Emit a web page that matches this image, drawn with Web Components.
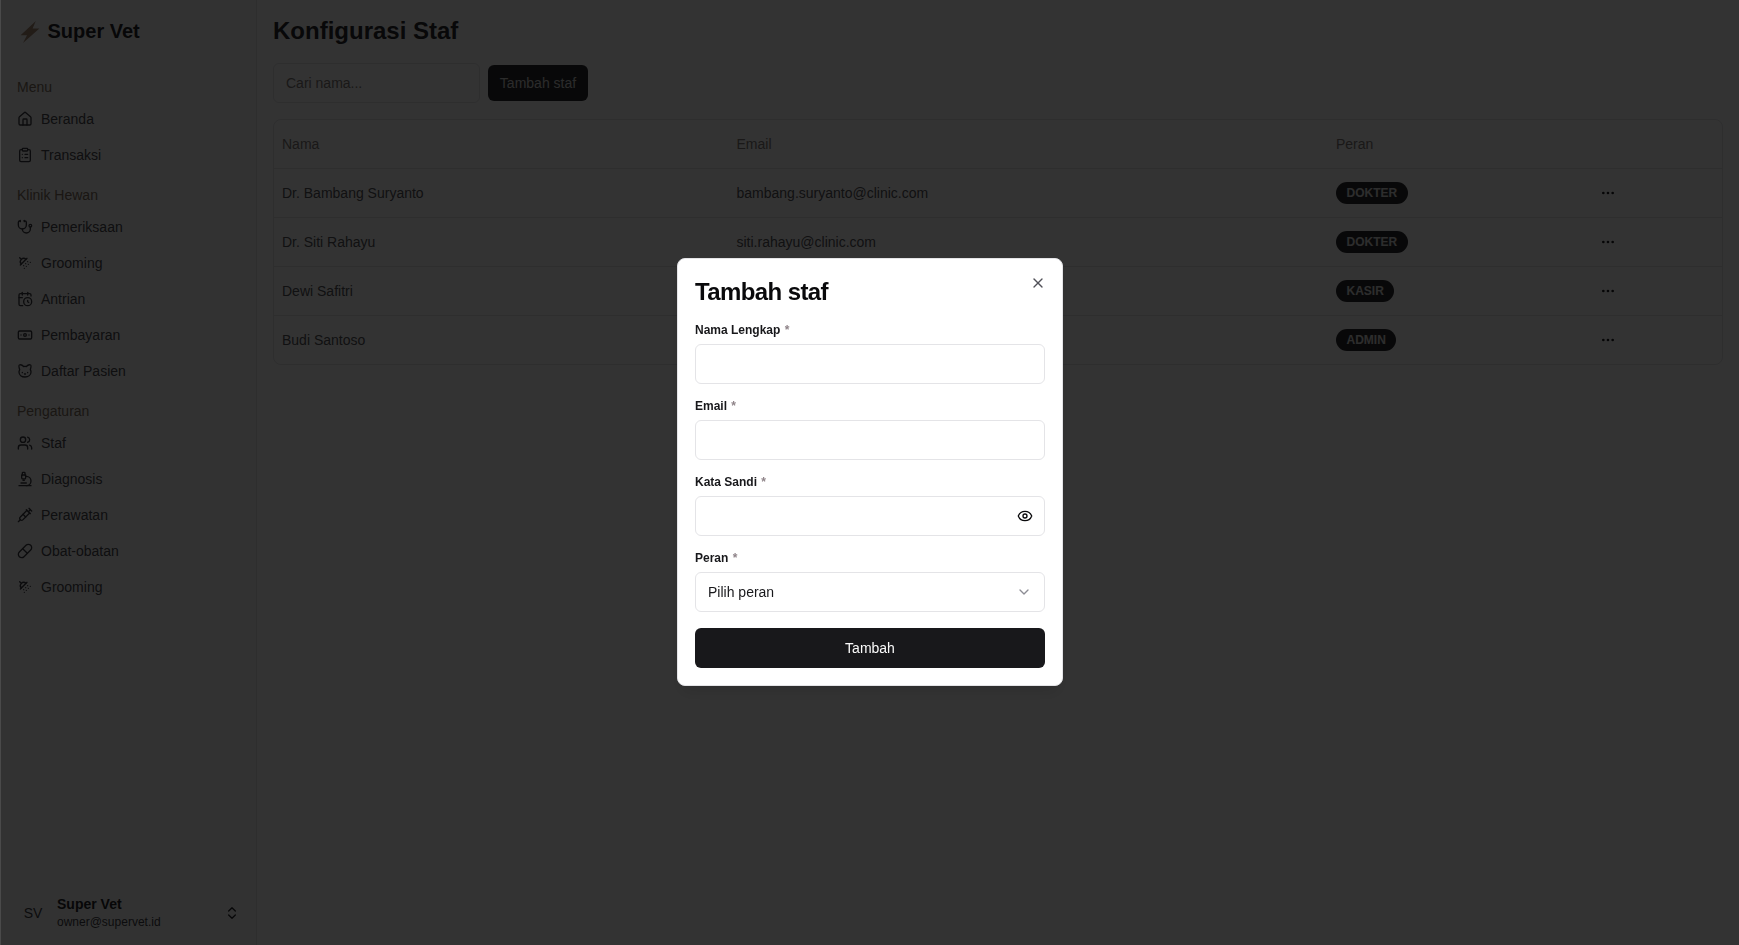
<!DOCTYPE html>
<html lang="id"><head><meta charset="utf-8"><title>Konfigurasi Staf</title>
<style>
html,body{margin:0;height:100%;background:#fff;overflow:hidden}
body{font-family:"Liberation Sans",Arial,sans-serif;font-size:14px;color:#2b2b2e}
</style></head><body>
<app-shell>
  <side-bar slot="side">
    <nav-group label="Menu">
      <nav-item icon="house">Beranda</nav-item>
      <nav-item icon="clipboard">Transaksi</nav-item>
    </nav-group>
    <nav-group label="Klinik Hewan">
      <nav-item icon="stethoscope">Pemeriksaan</nav-item>
      <nav-item icon="shower">Grooming</nav-item>
      <nav-item icon="calendar">Antrian</nav-item>
      <nav-item icon="banknote">Pembayaran</nav-item>
      <nav-item icon="cat">Daftar Pasien</nav-item>
    </nav-group>
    <nav-group label="Pengaturan">
      <nav-item icon="users">Staf</nav-item>
      <nav-item icon="microscope">Diagnosis</nav-item>
      <nav-item icon="syringe">Perawatan</nav-item>
      <nav-item icon="pill">Obat-obatan</nav-item>
      <nav-item icon="shower">Grooming</nav-item>
    </nav-group>
  </side-bar>
  <staff-page>
    <staff-row name="Dr. Bambang Suryanto" email="bambang.suryanto@clinic.com" role="DOKTER"></staff-row>
    <staff-row name="Dr. Siti Rahayu" email="siti.rahayu@clinic.com" role="DOKTER"></staff-row>
    <staff-row name="Dewi Safitri" email="dewi.safitri@clinic.com" role="KASIR"></staff-row>
    <staff-row name="Budi Santoso" email="budi.santoso@clinic.com" role="ADMIN"></staff-row>
  </staff-page>
</app-shell>
<add-staff-dialog></add-staff-dialog>
<script>
const ICONS={
house:'<path d="M15 21v-8a1 1 0 0 0-1-1h-4a1 1 0 0 0-1 1v8"/><path d="M3 10a2 2 0 0 1 .709-1.528l7-5.999a2 2 0 0 1 2.582 0l7 5.999A2 2 0 0 1 21 10v9a2 2 0 0 1-2 2H5a2 2 0 0 1-2-2z"/>',
clipboard:'<rect x="8" y="2" width="8" height="4" rx="1"/><path d="M16 4h2a2 2 0 0 1 2 2v14a2 2 0 0 1-2 2H6a2 2 0 0 1-2-2V6a2 2 0 0 1 2-2h2"/><path d="M12 11h4"/><path d="M12 16h4"/><path d="M8 11h.01"/><path d="M8 16h.01"/>',
stethoscope:'<path d="M11 2v2"/><path d="M5 2v2"/><path d="M5 3H4a2 2 0 0 0-2 2v4a6 6 0 0 0 12 0V5a2 2 0 0 0-2-2h-1"/><path d="M8 15a6 6 0 0 0 12 0v-3"/><circle cx="20" cy="10" r="2"/>',
shower:'<path d="m4 4 2.5 2.5"/><path d="M13.5 6.5a4.95 4.95 0 0 0-7 7"/><path d="M15 5 5 15"/><path d="M14 17v.01"/><path d="M10 16v.01"/><path d="M13 13v.01"/><path d="M16 10v.01"/><path d="M11 20v.01"/><path d="M17 14v.01"/><path d="M20 11v.01"/>',
calendar:'<path d="M16 14v2.2l1.6 1"/><path d="M16 2v4"/><path d="M21 7.5V6a2 2 0 0 0-2-2H5a2 2 0 0 0-2 2v14a2 2 0 0 0 2 2h3.5"/><path d="M3 10h5"/><path d="M8 2v4"/><circle cx="16" cy="16" r="6"/>',
banknote:'<rect width="20" height="12" x="2" y="6" rx="2"/><circle cx="12" cy="12" r="2"/><path d="M6 12h.01M18 12h.01"/>',
cat:'<path d="M12 5c.67 0 1.35.09 2 .26 1.78-2 5.03-2.84 6.42-2.26 1.4.58-.42 7-.42 7 .57 1.07 1 2.24 1 3.44C21 17.9 16.97 21 12 21s-9-3-9-7.56c0-1.25.5-2.4 1-3.44 0 0-1.89-6.42-.5-7 1.39-.58 4.72.23 6.5 2.23A9.04 9.04 0 0 1 12 5Z"/><path d="M8 14v.5"/><path d="M16 14v.5"/><path d="M11.25 16.25h1.5L12 17l-.75-.75Z"/>',
users:'<path d="M16 21v-2a4 4 0 0 0-4-4H6a4 4 0 0 0-4 4v2"/><circle cx="9" cy="7" r="4"/><path d="M22 21v-2a4 4 0 0 0-3-3.87"/><path d="M16 3.13a4 4 0 0 1 0 7.75"/>',
microscope:'<path d="M6 18h8"/><path d="M3 22h18"/><path d="M14 22a7 7 0 1 0 0-14h-1"/><path d="M9 14h2"/><path d="M9 12a2 2 0 0 1-2-2V6h6v4a2 2 0 0 1-2 2Z"/><path d="M12 6V3a1 1 0 0 0-1-1H9a1 1 0 0 0-1 1v3"/>',
syringe:'<path d="m18 2 4 4"/><path d="m17 7 3-3"/><path d="M19 9 8.7 19.3c-1 1-2.5 1-3.4 0l-.6-.6c-1-1-1-2.5 0-3.4L15 5"/><path d="m9 11 4 4"/><path d="m5 19-3 3"/><path d="m14 4 6 6"/>',
pill:'<path d="m10.5 20.5 10-10a4.95 4.95 0 1 0-7-7l-10 10a4.95 4.95 0 1 0 7 7Z"/><path d="m8.5 8.5 7 7"/>',
updown:'<path d="m7 15 5 5 5-5"/><path d="m7 9 5-5 5 5"/>',
eye:'<path d="M2.062 12.348a1 1 0 0 1 0-.696 10.75 10.75 0 0 1 19.876 0 1 1 0 0 1 0 .696 10.75 10.75 0 0 1-19.876 0"/><circle cx="12" cy="12" r="3"/>',
x:'<path d="M18 6 6 18"/><path d="m6 6 12 12"/>',
chevron:'<path d="m6 9 6 6 6-6"/>',
dots:'<circle cx="12" cy="12" r="1"/><circle cx="19" cy="12" r="1"/><circle cx="5" cy="12" r="1"/>'
};
function svg(n,size=16,sw=2){return `<svg xmlns="http://www.w3.org/2000/svg" width="${size}" height="${size}" viewBox="0 0 24 24" fill="none" stroke="currentColor" stroke-width="${sw}" stroke-linecap="round" stroke-linejoin="round" aria-hidden="true">${ICONS[n]}</svg>`}
class Base extends HTMLElement{
  constructor(){super();this.attachShadow({mode:'open'})}
  connectedCallback(){this.shadowRoot.innerHTML=this.render()}
}
customElements.define('app-shell',class extends Base{render(){return `<style>
:host{display:flex;height:100vh;width:100%;box-sizing:border-box;padding-left:1px}
::slotted(side-bar){flex:none}
.m{flex:1;min-width:0;display:flex}
</style><slot name="side"></slot><div class="m"><slot></slot></div>`}});
customElements.define('side-bar',class extends Base{render(){return `<style>
:host{display:flex;flex-direction:column;width:256px;height:100%;box-sizing:border-box;border-right:1px solid #e4e4e7;background:#fafafa}
header{display:flex;align-items:center;gap:7.5px;height:71px;padding:0 0 8px 19px;box-sizing:border-box;font-size:20px;font-weight:700;color:#27272a}
.nav{flex:1;display:flex;flex-direction:column;gap:8px}
footer{display:flex;align-items:center;height:48px;margin:0 8px 8px;padding:0 8px;gap:8px;color:#27272a}
.av{width:32px;height:32px;flex:none;display:flex;align-items:center;justify-content:center;font-size:14px;color:#3f3f46;border-radius:8px}
.t{flex:1;min-width:0;display:flex;flex-direction:column}
.n{font-weight:700;font-size:14px;line-height:16px;margin-bottom:2px}
.e{font-size:12px;line-height:16px;color:#3f3f46}
</style>
<header><svg width="20" height="24" viewBox="0 0 20 24" aria-hidden="true"><path d="M15.8 1 .6 15.2h6.4L3 23 19.4 8.4h-6.8z" fill="#a88a75"/></svg><span>Super Vet</span></header>
<div class="nav"><slot></slot></div>
<footer><div class="av">SV</div><div class="t"><span class="n">Super Vet</span><span class="e">owner@supervet.id</span></div>${svg('updown',16)}</footer>`}});
customElements.define('nav-group',class extends Base{render(){return `<style>
:host{display:block;padding:0 8px}
.l{height:32px;line-height:32px;padding:0 8px;font-size:14px;color:#807060}
.i{display:flex;flex-direction:column;gap:4px}
</style><div class="l">${this.getAttribute('label')}</div><div class="i"><slot></slot></div>`}});
customElements.define('nav-item',class extends Base{render(){return `<style>
:host{display:flex;align-items:center;gap:8px;height:32px;padding:0 8px;font-size:14px;color:#4a4a50}
svg{flex:none;color:#3a3a40}
</style>${svg(this.getAttribute('icon'),16)}<slot></slot>`}});
customElements.define('staff-page',class extends Base{render(){return `<style>
:host{flex:1;min-width:0;display:flex;flex-direction:column;gap:16px;padding:15px 16px 16px;box-sizing:border-box;background:#fff}
h1{margin:0;font-size:24px;line-height:32px;font-weight:700;color:#2b2b2e}
.bar{display:flex;align-items:center;gap:8px}
.s{width:207px;height:40px;box-sizing:border-box;border:1px solid #e4e4e7;border-radius:6px;padding:0 12px;line-height:38px;font-size:14px;color:#807a78}
.b{width:100px;height:36px;border-radius:6px;background:#2b2b2e;color:#d8d8d8;display:flex;align-items:center;justify-content:center;font-size:14px}
.t{border:1px solid #e4e4e7;border-radius:8px;overflow:hidden}
.h{display:grid;grid-template-columns:454.5px 599.5px 256px 1fr;height:48px;align-items:center;border-bottom:1px solid #e4e4e7;color:#807a78;font-size:14px}
.h span{padding-left:8px}
</style>
<h1>Konfigurasi Staf</h1>
<div class="bar"><div class="s">Cari nama...</div><div class="b">Tambah staf</div></div>
<div class="t"><div class="h"><span>Nama</span><span>Email</span><span>Peran</span><span></span></div><slot></slot></div>`}});
customElements.define('staff-row',class extends Base{render(){const a=n=>this.getAttribute(n);return `<style>
:host{display:grid;grid-template-columns:454.5px 599.5px 256px 1fr;height:48px;align-items:center;border-bottom:1px solid #e4e4e7;font-size:14px;color:#55555a}
:host(:last-child){border-bottom:0}
span.c{padding-left:8px}
.bd{display:inline-block;height:22px;line-height:22px;padding:0 10.5px;border-radius:11px;background:#2b2b2e;color:#e0e0e0;font-size:12px;font-weight:700}
.d{margin-left:16px;display:flex;color:#1c1c1f}
</style><span class="c">${a('name')}</span><span class="c">${a('email')}</span><span class="c"><span class="bd">${a('role')}</span></span><div class="d">${svg('dots',16)}</div>`}});
customElements.define('form-field',class extends Base{render(){return `<style>
:host{display:flex;flex-direction:column;gap:7px}
label{font-size:12px;line-height:14px;font-weight:700;color:#18181b}
label i{font-style:normal;font-weight:700;color:#8f8489;margin-left:1px}
.box{height:40px;box-sizing:border-box;border:1px solid #e4e4e7;border-radius:6px;padding:0 12px;display:flex;align-items:center;justify-content:space-between;font-size:14px;color:#18181b;background:#fff}
</style><label>${this.getAttribute('label')} <i>*</i></label><div class="box"><slot></slot></div>`}});
customElements.define('add-staff-dialog',class extends Base{render(){return `<style>
:host{position:fixed;inset:0;z-index:50;background:linear-gradient(90deg,rgba(0,0,0,.71) 1px,rgba(0,0,0,.8) 1px);display:flex;align-items:center;justify-content:center;padding:0 0 1px 1px;box-sizing:border-box}
.d{position:relative;width:386px;box-sizing:border-box;background:#fff;border:1px solid #e4e4e7;border-radius:8px;padding:17px;display:flex;flex-direction:column;gap:15px;box-shadow:0 10px 15px -3px rgba(0,0,0,.1)}
h2{margin:0;font-size:24px;line-height:32px;font-weight:700;letter-spacing:-.6px;color:#09090b}
.x{position:absolute;right:16px;top:16px;color:#3f3f46;display:flex;opacity:.9}
.b{margin-top:1px;height:40px;border-radius:6px;background:#18181b;color:#fafafa;display:flex;align-items:center;justify-content:center;font-size:14px}
</style>
<div class="d" role="dialog"><h2>Tambah staf</h2><div class="x">${svg('x',16)}</div>
<form-field label="Nama Lengkap"></form-field>
<form-field label="Email"></form-field>
<form-field label="Kata Sandi"><span></span><span style="display:flex;margin-right:-1px;color:#09090b">${svg('eye',16)}</span></form-field>
<form-field label="Peran"><span>Pilih peran</span><span style="display:flex;color:#71717a;opacity:.8">${svg('chevron',16)}</span></form-field>
<div class="b">Tambah</div></div>`}});
</script>
</body></html>
